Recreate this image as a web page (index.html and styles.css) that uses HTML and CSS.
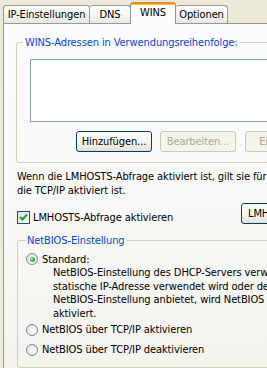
FILE: index.html
```html
<!DOCTYPE html>
<html lang="de">
<head>
<meta charset="utf-8">
<title>WINS</title>
<link rel="stylesheet" href="styles.css">
</head>
<body>
<div class="dialog">
  <div class="tabs">
    <div class="tab tab-ip">IP-Einstellungen</div>
    <div class="tab tab-dns">DNS</div>
    <div class="tab tab-wins active">WINS</div>
    <div class="tab tab-opt">Optionen</div>
  </div>
  <div class="panel">
    <fieldset class="group group-wins">
      <legend>WINS-Adressen in Verwendungsreihenfolge:</legend>
      <div class="listbox"></div>
      <div class="btnrow">
        <button class="btn btn-default">Hinzufügen...</button>
        <button class="btn" disabled>Bearbeiten...</button>
        <button class="btn" disabled>Entfernen</button>
      </div>
    </fieldset>
    <p class="info">Wenn die LMHOSTS-Abfrage aktiviert ist, gilt sie für alle Verbindungen, für<br>die TCP/IP aktiviert ist.</p>
    <div class="lmrow">
      <label class="check">
        <span class="checkbox"><svg width="9" height="9" viewBox="0 0 9 9"><path d="M1 4 L3.5 6.5 L8 1.5" fill="none" stroke="#21A121" stroke-width="2"/></svg></span>
        <span>LMHOSTS-Abfrage aktivieren</span>
      </label>
      <button class="btn btn-lm">LMHOSTS importieren...</button>
    </div>
    <fieldset class="group group-nb">
      <legend>NetBIOS-Einstellung</legend>
      <div class="radio-row r1"><span class="radio checked"></span><span>Standard:</span></div>
      <p class="desc">NetBIOS-Einstellung des DHCP-Servers verwenden. Falls eine<br>statische IP-Adresse verwendet wird oder der DHCP-Server keine<br>NetBIOS-Einstellung anbietet, wird NetBIOS über TCP/IP<br>aktiviert.</p>
      <div class="radio-row r2"><span class="radio"></span><span>NetBIOS über TCP/IP aktivieren</span></div>
      <div class="radio-row r3"><span class="radio"></span><span>NetBIOS über TCP/IP deaktivieren</span></div>
    </fieldset>
  </div>
</div>
</body>
</html>
```
FILE: styles.css
```css
html, body {
  margin: 0;
  padding: 0;
}
body {
  width: 267px;
  height: 368px;
  overflow: hidden;
  background: #ECE9D8;
  font-family: "DejaVu Sans Condensed", "Liberation Sans", sans-serif;
  font-size: 11px;
  letter-spacing: -0.1px;
  color: #000;
}
.dialog {
  padding: 2px 0 0 3px;
  width: 330px;
}
.tabs {
  display: flex;
  align-items: flex-end;
  height: 21px;
  position: relative;
  z-index: 2;
}
.tab {
  box-sizing: border-box;
  flex-shrink: 0;
  height: 18px;
  border: 1px solid #919B9C;
  border-bottom: none;
  border-left: none;
  border-radius: 3px 3px 0 0;
  background: linear-gradient(#FFFFFF, #F3F3EF 60%, #E8E7E0);
  display: flex;
  align-items: center;
  justify-content: center;
  padding-bottom: 1px;
  white-space: nowrap;
}
.tab-ip { width: 87px; border-left: 1px solid #919B9C; }
.tab-dns { width: 41px; }
.tab-wins { width: 46px; }
.tab-opt { width: 52px; }
.tab.active {
  height: 22px;
  margin-bottom: -1px;
  background: #FCFCFE;
  border-top: 2px solid #E68B2C;
  box-shadow: inset 0 1px 0 #FFC83C;
  border-left: 1px solid #919B9C;
  margin-left: -1px;
  padding-bottom: 4px;
}
.panel {
  box-sizing: border-box;
  border: 1px solid #919B9C;
  width: 320px;
  height: 400px;
  background: linear-gradient(#FCFCFE, #F7F7F4 60%, #F2F1EB);
  padding: 12px 0 0 12px;
}
.group {
  margin: 0;
  border: 1px solid #D0D0BF;
  border-radius: 3px;
  min-width: 0;
}
.group legend {
  color: #0046D5;
  line-height: 13px;
  white-space: nowrap;
  margin: 0;
}
.group-wins {
  width: 290px;
  padding: 10px 0 10px 6px;
}
.group-wins legend {
  padding: 0 2px;
}
.listbox {
  box-sizing: border-box;
  width: 280px;
  height: 63px;
  margin-left: 7px;
  border: 1px solid #7F9DB9;
  background: #FFFFFF;
}
.btnrow {
  display: flex;
  gap: 8px;
  margin: 9px 0 0 53px;
}
.btn {
  box-sizing: border-box;
  flex-shrink: 0;
  height: 21px;
  width: 76px;
  padding: 0;
  font: inherit;
  letter-spacing: inherit;
  color: #000;
  border: 1px solid #003C74;
  border-radius: 3px;
  background: linear-gradient(#FFFFFF, #F4F3EE 60%, #E3E0D5);
  white-space: nowrap;
  overflow: hidden;
  text-align: center;
}
.btn:disabled {
  color: #ACA899;
  border-color: #C9C7BA;
  background: #F5F4EA;
}
.btnrow .btn:last-child {
  margin-left: 1px;
}
.info {
  margin: 7px 0 0 1px;
  line-height: 14px;
  white-space: nowrap;
}
.lmrow {
  display: flex;
  align-items: flex-start;
  margin: 5px 0 0 1px;
}
.check {
  display: flex;
  flex-shrink: 0;
  align-items: center;
  gap: 3px;
  width: 224px;
  margin-top: 8px;
  line-height: 13px;
  white-space: nowrap;
}
.checkbox {
  box-sizing: border-box;
  width: 13px;
  height: 13px;
  border: 1px solid #1C5180;
  background: linear-gradient(135deg, #DCDCD7, #FFFFFF);
  display: flex;
  align-items: center;
  justify-content: center;
}
.btn-lm {
  width: 130px;
  text-align: left;
  padding-left: 6px;
}
.group-nb {
  width: 290px;
  margin: 10px 0 0 1px;
  padding: 5px 0 10px 8px;
}
.group-nb legend {
  padding: 0 1px;
}
.radio-row {
  display: flex;
  align-items: center;
  gap: 4px;
  height: 14px;
  white-space: nowrap;
}
.radio {
  box-sizing: border-box;
  width: 12px;
  height: 12px;
  border-radius: 50%;
  border: 1px solid #6E8DAE;
  background: radial-gradient(circle at 65% 65%, #FFFFFF, #E4E3DC 80%);
  display: flex;
  align-items: center;
  justify-content: center;
}
.radio.checked::after {
  content: "";
  width: 5px;
  height: 5px;
  border-radius: 50%;
  background: radial-gradient(circle at 35% 35%, #A6E69A, #21A121 70%);
}
.desc {
  margin: 0 0 0 27px;
  line-height: 13.7px;
  white-space: nowrap;
}
.r2 { margin-top: 2px; }
.r3 { margin-top: 6px; }
```
